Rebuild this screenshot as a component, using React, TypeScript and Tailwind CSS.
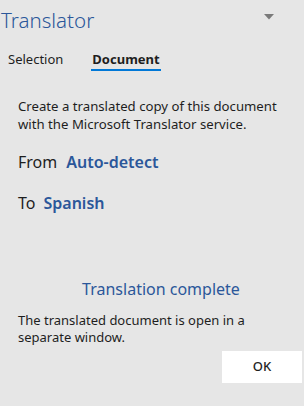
export default function App() {
  return (
    <main
      className="flex h-[406px] w-[304px] flex-col overflow-hidden bg-[#e6e6e6] text-[#1e1e1e]"
      style={{ fontFamily: "'Noto Sans', 'Open Sans', sans-serif" }}
    >
      {/* Pane header */}
      <header className="flex items-start justify-between pl-px pr-[30px] pt-[5px]">
        <h1 className="text-[20.5px] font-light leading-[30px] text-[#2b579a]">Translator</h1>
        <svg width="10" height="6" viewBox="0 0 10 6" className="mt-[9px]" aria-hidden>
          <path d="M0 0 H10 L5 5.5 Z" fill="#7a7a7a" />
        </svg>
      </header>

      {/* Tabs */}
      <nav className="mt-[15px] flex gap-[28px] pl-2 text-[13px] leading-[18px]">
        <button className="pb-[3px]">Selection</button>
        <button className="border-b-2 border-[#0078d7] px-px pb-[1px] font-bold">Document</button>
      </nav>

      <section className="px-[18px] pt-[26px]">
        <p className="text-[13.2px] leading-[18px]">
          Create a translated copy of this document with the Microsoft Translator service.
        </p>

        <div className="mt-[17px] flex items-baseline gap-[9px] text-[16px] leading-[24px]">
          <span>From</span>
          <span className="font-semibold text-[#2b579a]">Auto-detect</span>
        </div>
        <div className="mt-[17px] flex items-baseline gap-[8px] text-[16px] leading-[24px]">
          <span>To</span>
          <span className="font-semibold text-[#2b579a]">Spanish</span>
        </div>
      </section>

      <section className="mt-auto pb-[23px]">
        <h2 className="pl-[18px] text-center text-[16px] leading-[22px] text-[#2b579a]">Translation complete</h2>
        <p className="mt-[12px] px-[18px] text-[13px] leading-[17px]">
          The translated document is open in a separate window.
        </p>
        <div className="mt-[5px] flex justify-end pr-[2px]">
          <button className="h-[32px] w-[80px] bg-white text-[13px] font-medium">OK</button>
        </div>
      </section>
    </main>
  );
}
